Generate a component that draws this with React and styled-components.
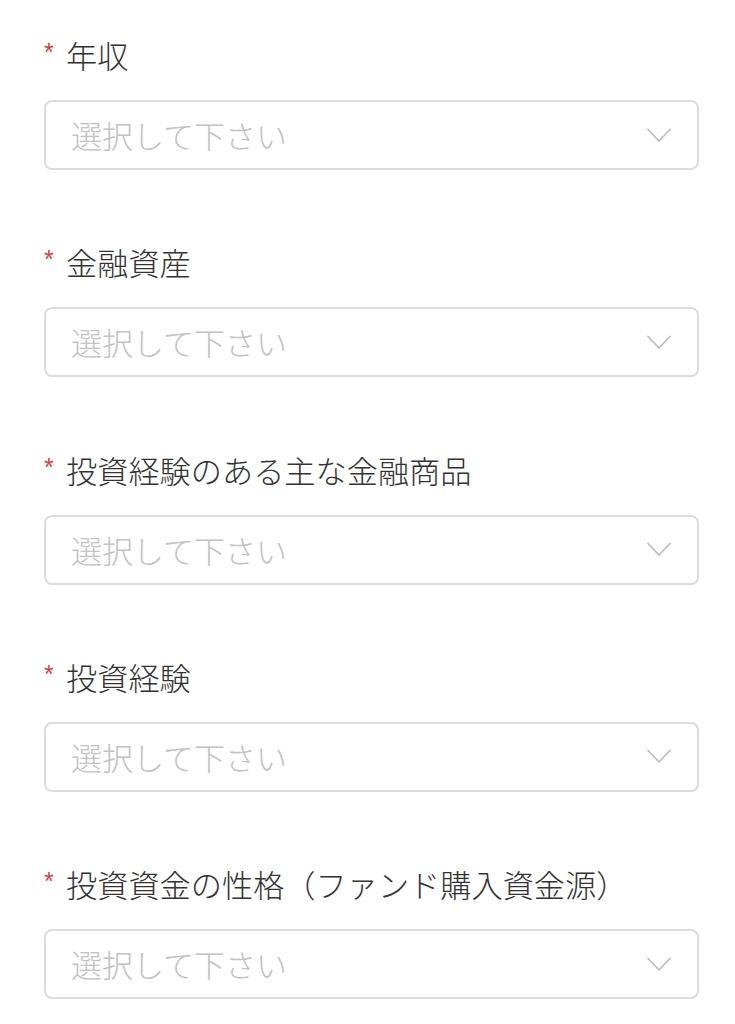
import React from "react";
import styled, { createGlobalStyle } from "styled-components";

const GlobalStyle = createGlobalStyle`
  html, body { margin: 0; padding: 0; background: #ffffff; }
  body { font-family: "Noto Sans CJK JP", "Noto Sans", sans-serif; }
`;

const Page = styled.div`
  display: flex;
  flex-direction: column;
  gap: 69.3px;
  padding: 32px 36px 40px 44px;
`;

const Field = styled.div`
  display: flex;
  flex-direction: column;
  gap: 23px;
`;

const Label = styled.div`
  display: flex;
  align-items: center;
  height: 45px;
  font-size: 31.2px;
  font-weight: 300;
  line-height: 45px;
  color: #333333;
  white-space: nowrap;
`;

const Star = styled.span`
  color: #e23b3f;
  font-size: 25px;
  width: 22px;
  margin-top: -4px;
  font-family: "Liberation Sans", sans-serif;
`;

const Select = styled.div`
  box-sizing: border-box;
  height: 70px;
  border: 2px solid #dcdcdc;
  border-radius: 8px;
  display: flex;
  align-items: center;
  justify-content: space-between;
  padding: 0 26px 0 25px;
`;

const Placeholder = styled.span`
  font-size: 31px;
  font-weight: 300;
  color: #c2c2c2;
  line-height: 1;
  margin-top: -1px;
`;

const Chevron = () => (
  <svg width="24" height="15" viewBox="0 0 24 15" fill="none">
    <path d="M1 1.5 L12 13 L23 1.5" stroke="#bdbdbd" strokeWidth="1.8" strokeLinecap="round" strokeLinejoin="round" />
  </svg>
);

const fields = [
  "年収",
  "金融資産",
  "投資経験のある主な金融商品",
  "投資経験",
  "投資資金の性格（ファンド購入資金源）",
];

export default function App() {
  return (
    <>
      <GlobalStyle />
      <Page>
        {fields.map((f) => (
          <Field key={f}>
            <Label>
              <Star>*</Star>
              {f}
            </Label>
            <Select>
              <Placeholder>選択して下さい</Placeholder>
              <Chevron />
            </Select>
          </Field>
        ))}
      </Page>
    </>
  );
}
